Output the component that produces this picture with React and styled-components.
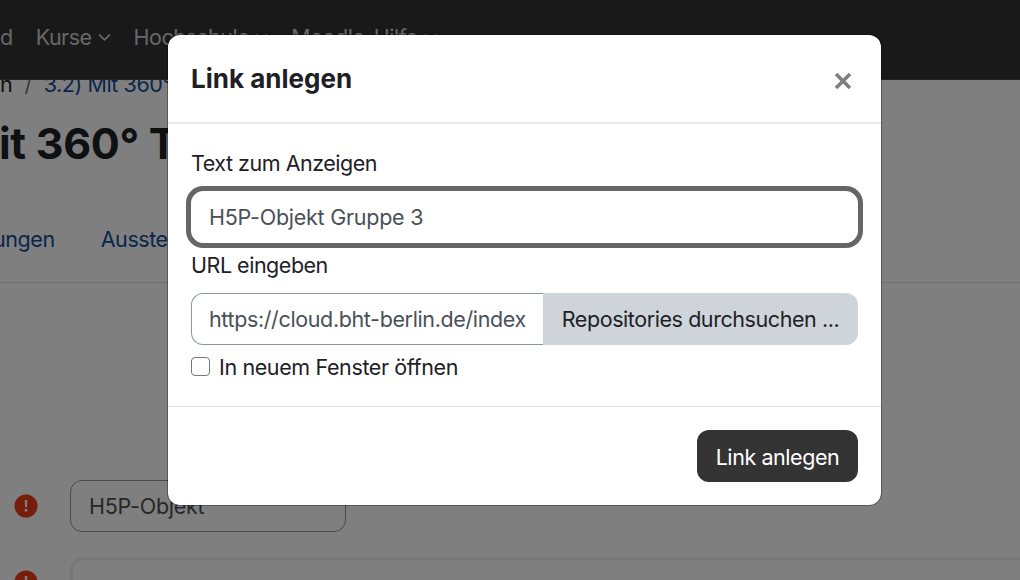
import React from "react";
import styled, { createGlobalStyle, css } from "styled-components";

const GlobalStyle = createGlobalStyle`
  *, *::before, *::after { box-sizing: border-box; }
  body {
    margin: 0;
    overflow: hidden;
    font-family: Inter, "Liberation Sans", sans-serif;
    font-size: 21.5px;
    letter-spacing: -0.43px;
    line-height: 33px;
    color: #1d2125;
    background: #fff;
  }
`;

const Page = styled.div`
  position: relative;
  width: 1020px;
  height: 580px;
  overflow: hidden;
  display: flex;
  flex-direction: column;
  background: #fff;
  white-space: nowrap;

  > * { flex-shrink: 0; }
`;

const NavBar = styled.nav`
  height: 80px;
  padding: 0 0 4px;
  display: flex;
  align-items: center;
  gap: 23px;
  letter-spacing: -0.5px;
  background: #333;
  border-bottom: 1px solid #484848;
`;

const NavItem = styled.span`
  display: flex;
  align-items: center;
  gap: 6px;
  color: #cfcfcf;
`;

const Breadcrumb = styled.div`
  height: 27px;
  margin-left: -12px;
  overflow: hidden;
  display: flex;
  gap: 12px;
`;

const Crumb = styled.span`
  margin-top: -12px;
  color: ${(p) => (p.$link ? "#0f4c97" : p.$muted ? "#6a737b" : "#1d2125")};
`;

const Title = styled.h1`
  margin: 10px 0 0 -1px;
  font-size: 43px;
  line-height: 52px;
  font-weight: 700;
  letter-spacing: -0.3px;
`;

const Tabs = styled.div`
  height: 114px;
  margin-left: -7px;
  padding-top: 54px;
  display: flex;
  gap: 46px;
  color: #0f4c97;
  border-bottom: 1px solid #dee2e6;
`;

const Form = styled.div`
  padding: 197px 0 0 14px;
  display: flex;
  flex-direction: column;
  gap: 25px;
`;

const FormRow = styled.div`
  display: flex;
  align-items: ${(p) => (p.$top ? "flex-start" : "center")};
  gap: 32px;
`;

const AlertIcon = styled.svg`
  flex: none;
  width: 24px;
  height: 24px;
  margin-top: ${(p) => p.$offset || 0}px;
`;

const fieldBase = css`
  height: 52px;
  padding: 0 17px;
  font: inherit;
  letter-spacing: ${(p) => p.$tracking || -0.25}px;
  color: #495057;
  background: #fff;
  border: 1px solid #8f959e;
  border-radius: 12px;
  outline: none;
`;

const NameField = styled.input`
  ${fieldBase}
  width: 276px;
  padding-left: 18px;
`;

const EditorBox = styled.div`
  flex: 1;
  height: 80px;
  border: solid #eee;
  border-width: 3px 0 0 3px;
  border-radius: 14px 0 0 0;
`;

const Backdrop = styled.div`
  position: absolute;
  inset: 0;
  padding: 34px 0 0 167px;
  background: rgba(0, 0, 0, 0.5);
`;

const Modal = styled.section`
  width: 715px;
  height: 472px;
  display: flex;
  flex-direction: column;
  background: #fff;
  background-clip: padding-box;
  border: 1px solid rgba(0, 0, 0, 0.3);
  border-radius: 13px;
`;

const ModalHeader = styled.header`
  height: 89px;
  padding: 0 29px 0 23px;
  display: flex;
  align-items: center;
  justify-content: space-between;
  border-bottom: 2px solid #e4e8eb;
`;

const ModalTitle = styled.h2`
  margin: 0;
  font-size: 26px;
  line-height: 36px;
  font-weight: 700;
  letter-spacing: 0;
`;

const CloseIcon = styled.svg`
  width: 18px;
  height: 18px;
  margin-top: 5px;
`;

const ModalBody = styled.div`
  flex: 1;
  padding: 23px 23px 0;
`;

const Label = styled.label`
  display: block;
  margin-bottom: 11px;
  letter-spacing: -0.48px;
`;

const TextField = styled.input`
  ${fieldBase}
  display: block;
  width: 667px;
  margin-bottom: 6px;
  border-color: #fff;
  box-shadow: 0 0 0 5px #666;
`;

const InputGroup = styled.div`
  display: flex;
  width: 667px;
`;

const UrlField = styled.input`
  ${fieldBase}
  width: 352px;
  border-right: 0;
  border-radius: 12px 0 0 12px;
`;

const Button = styled.button`
  height: 52px;
  padding: 0 18px;
  font: inherit;
  letter-spacing: -0.43px;
  white-space: nowrap;
  border: 0;
  ${(p) =>
    p.$primary
      ? css`
          width: 161px;
          padding-top: 2px;
          color: #fff;
          background: #333;
          border-radius: 12px;
        `
      : css`
          flex: 1;
          color: #1d2125;
          background: #ced4da;
          border-radius: 0 12px 12px 0;
        `}
`;

const CheckRow = styled.label`
  margin-top: 6px;
  display: flex;
  align-items: center;
  gap: 9px;
  letter-spacing: -0.38px;
`;

const CheckBox = styled.span`
  width: 19px;
  height: 19px;
  margin-top: -2px;
  border: 1.5px solid #767676;
  border-radius: 4px;
`;

const ModalFooter = styled.footer`
  height: 99px;
  padding: 23px 23px 0;
  display: flex;
  justify-content: flex-end;
  border-top: 1px solid #dee2e6;
`;

const Chevron = () => (
  <svg width="13" height="9" viewBox="0 0 13 9" fill="none" stroke="#cfcfcf" strokeWidth="1.7" strokeLinecap="round" strokeLinejoin="round">
    <path d="M1.5 1.8 6.5 6.8 11.5 1.8" />
  </svg>
);

const Required = ({ offset }) => (
  <AlertIcon $offset={offset} viewBox="0 0 24 24">
    <circle cx="12" cy="12" r="11.5" fill="#ee3b16" />
    <path d="M10.7 6h2.6l-.35 7.2h-1.9zM10.7 15h2.6v2.5h-2.6z" fill="#fff" />
  </AlertIcon>
);

export default function App() {
  return (
    <>
      <GlobalStyle />
      <Page>
        <NavBar>
          <NavItem>d</NavItem>
          <NavItem>Kurse <Chevron /></NavItem>
          <NavItem>Hochschule <Chevron /></NavItem>
          <NavItem>Moodle-Hilfe <Chevron /></NavItem>
        </NavBar>
        <Breadcrumb>
          <Crumb>en</Crumb>
          <Crumb $muted>/</Crumb>
          <Crumb $link>3.2) Mit 360°</Crumb>
        </Breadcrumb>
        <Title>it 360° T</Title>
        <Tabs>
          <span>ungen</span>
          <span>Ausste</span>
        </Tabs>
        <Form>
          <FormRow>
            <Required />
            <NameField defaultValue="H5P-Objekt" />
          </FormRow>
          <FormRow $top>
            <Required offset={13} />
            <EditorBox />
          </FormRow>
        </Form>
        <Backdrop>
          <Modal role="dialog">
            <ModalHeader>
              <ModalTitle>Link anlegen</ModalTitle>
              <CloseIcon viewBox="0 0 18 18" stroke="#7f7f7f" strokeWidth="3.6">
                <path d="M2 2 16 16M16 2 2 16" />
              </CloseIcon>
            </ModalHeader>
            <ModalBody>
              <Label>Text zum Anzeigen</Label>
              <TextField defaultValue="H5P-Objekt Gruppe 3" />
              <Label>URL eingeben</Label>
              <InputGroup>
                <UrlField $tracking={-0.37} defaultValue="https://cloud.bht-berlin.de/index" />
                <Button>Repositories durchsuchen ...</Button>
              </InputGroup>
              <CheckRow>
                <CheckBox />
                In neuem Fenster öffnen
              </CheckRow>
            </ModalBody>
            <ModalFooter>
              <Button $primary>Link anlegen</Button>
            </ModalFooter>
          </Modal>
        </Backdrop>
      </Page>
    </>
  );
}
